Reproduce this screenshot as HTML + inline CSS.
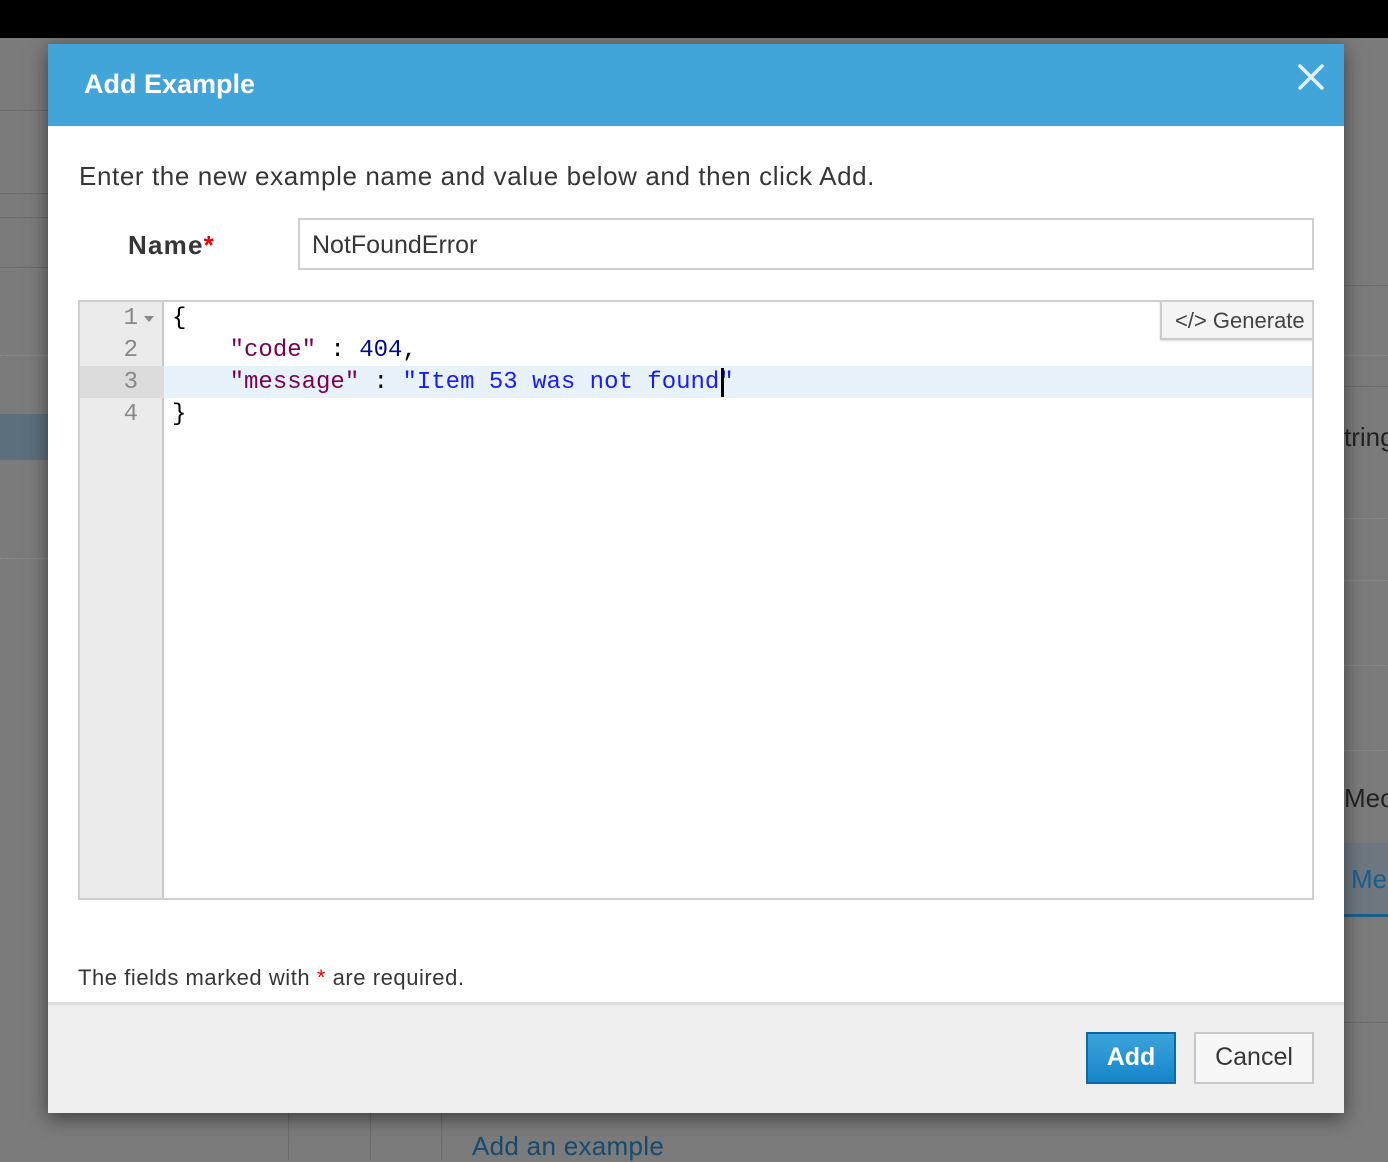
<!DOCTYPE html>
<html><head><style>
*{box-sizing:border-box;margin:0;padding:0}
body{width:1388px;height:1160px;background:#7b7b7b;position:relative;overflow:hidden;font-family:"Liberation Sans",sans-serif}
.a{position:absolute}
.hl{position:absolute;height:1px;background:#6c6c6c}
.dl{position:absolute;height:0;border-top:1px dotted #8e8e8e}
.mono{font-family:"Liberation Mono",monospace;font-size:24px}
</style></head><body>
<div class="a" style="left:0;top:0;width:1388px;height:38px;background:#000"></div>
<div class="hl" style="left:0;top:110px;width:48px"></div>
<div class="hl" style="left:0;top:193px;width:48px"></div>
<div class="hl" style="left:0;top:217px;width:48px"></div>
<div class="hl" style="left:0;top:267px;width:48px"></div>
<div class="dl" style="left:0;top:355px;width:48px"></div>
<div class="a" style="left:0;top:414px;width:48px;height:46px;background:#5b6f7c"></div>
<div class="dl" style="left:0;top:558px;width:48px"></div>
<div class="hl" style="left:1344px;top:285px;width:44px"></div>
<div class="dl" style="left:1344px;top:355px;width:44px"></div>
<div class="hl" style="left:1344px;top:386px;width:44px"></div>
<div class="a" style="left:1344px;top:422px;font-size:26px;color:#222">tring</div>
<div class="dl" style="left:1344px;top:518px;width:44px"></div>
<div class="dl" style="left:1344px;top:580px;width:44px"></div>
<div class="dl" style="left:1344px;top:665px;width:44px"></div>
<div class="dl" style="left:1344px;top:750px;width:44px"></div>
<div class="a" style="left:1344px;top:783px;font-size:26px;color:#222">Mec</div>
<div class="a" style="left:1344px;top:843px;width:44px;height:74px;background:#6d7780;border-bottom:3px solid #1e5d8a"></div>
<div class="a" style="left:1351px;top:864px;font-size:26px;color:#1a5e8c">Me</div>
<div class="hl" style="left:1344px;top:1022px;width:44px"></div>
<div class="a" style="left:288px;top:1113px;width:1px;height:47px;background:#6c6c6c"></div>
<div class="a" style="left:370px;top:1113px;width:1px;height:47px;background:#6c6c6c"></div>
<div class="a" style="left:441px;top:1113px;width:1px;height:47px;background:#6c6c6c"></div>
<div class="a" style="left:472px;top:1131px;font-size:26px;color:#164a6e;letter-spacing:.3px">Add an example</div>

<div class="a" style="left:48px;top:44px;width:1296px;height:1069px;background:#fff;box-shadow:0 5px 18px rgba(0,0,0,.5)">
  <div class="a" style="left:0;top:0;width:1296px;height:82px;background:#41a5d9"></div>
  <div class="a" style="left:36px;top:25px;font-size:27px;font-weight:bold;color:#fff">Add Example</div>
  <svg class="a" style="left:1250px;top:20px" width="26" height="26" viewBox="0 0 26 26"><path d="M2 2L24 24M24 2L2 24" stroke="#fff" stroke-width="3.5" stroke-linecap="round" opacity=".85"/></svg>
  <div class="a" style="left:31px;top:117px;font-size:26px;color:#363636;letter-spacing:.6px">Enter the new example name and value below and then click Add.</div>
  <div class="a" style="left:80px;top:186px;font-size:26px;font-weight:bold;color:#363636;letter-spacing:1.2px">Name<span style="color:#e00">*</span></div>
  <div class="a" style="left:250px;top:174px;width:1016px;height:52px;border:2px solid #cfcfcf;padding:11px 12px;font-size:25px;color:#363636">NotFoundError</div>
  <div class="a" style="left:30px;top:256px;width:1236px;height:600px;border:2px solid #d0d0d0;background:#fff;overflow:hidden">
    <div class="a" style="left:0;top:0;width:84px;height:600px;background:#ebebeb;border-right:2px solid #c6c6c6"></div>
    <div class="a" style="left:0;top:64px;width:84px;height:32px;background:#dcdcdc"></div>
    <div class="a" style="left:84px;top:64px;width:1152px;height:32px;background:#e8f2fb"></div>
    <div class="a mono" style="left:0;top:1px;width:58px;text-align:right;color:#888;line-height:32px">1<br>2<br>3<br>4</div>
    <svg class="a" style="left:64px;top:14px" width="10" height="6"><path d="M0 0h10L5 6z" fill="#888"/></svg>
    <div class="a mono" style="left:92px;top:1px;line-height:32px;white-space:pre;color:#000">{
    <span style="color:#7a0055">"code"</span> : <span style="color:#000a8b">404</span>,
    <span style="color:#7a0055">"message"</span> : <span style="color:#1a1aff">"Item 53 was not found"</span>
}</div>
    <div class="a" style="left:641px;top:66px;width:3px;height:29px;background:#000"></div>
    <div class="a" style="left:1080px;top:-2px;width:154px;height:40px;border:2px solid #cacaca;background:#f4f4f4;font-size:22px;color:#444;padding:6px 0 0 13px;box-shadow:0 1px 2px rgba(0,0,0,.15);white-space:nowrap">&lt;/&gt; Generate</div>
  </div>
  <div class="a" style="left:30px;top:921px;font-size:22px;color:#363636;letter-spacing:.55px">The fields marked with <span style="color:#e00">*</span> are required.</div>
  <div class="a" style="left:0;top:958px;width:1296px;height:111px;background:#efefef;border-top:3px solid #dedede"></div>
  <div class="a" style="left:1038px;top:988px;width:90px;height:52px;background:linear-gradient(#3ca4dc,#1585c9);border:2px solid #0f6aa3;color:#fff;font-size:25px;font-weight:bold;text-align:center;line-height:47px">Add</div>
  <div class="a" style="left:1146px;top:988px;width:120px;height:52px;background:#f7f7f7;border:2px solid #c8c8c8;color:#363636;font-size:25px;text-align:center;line-height:47px">Cancel</div>
</div>
</body></html>
